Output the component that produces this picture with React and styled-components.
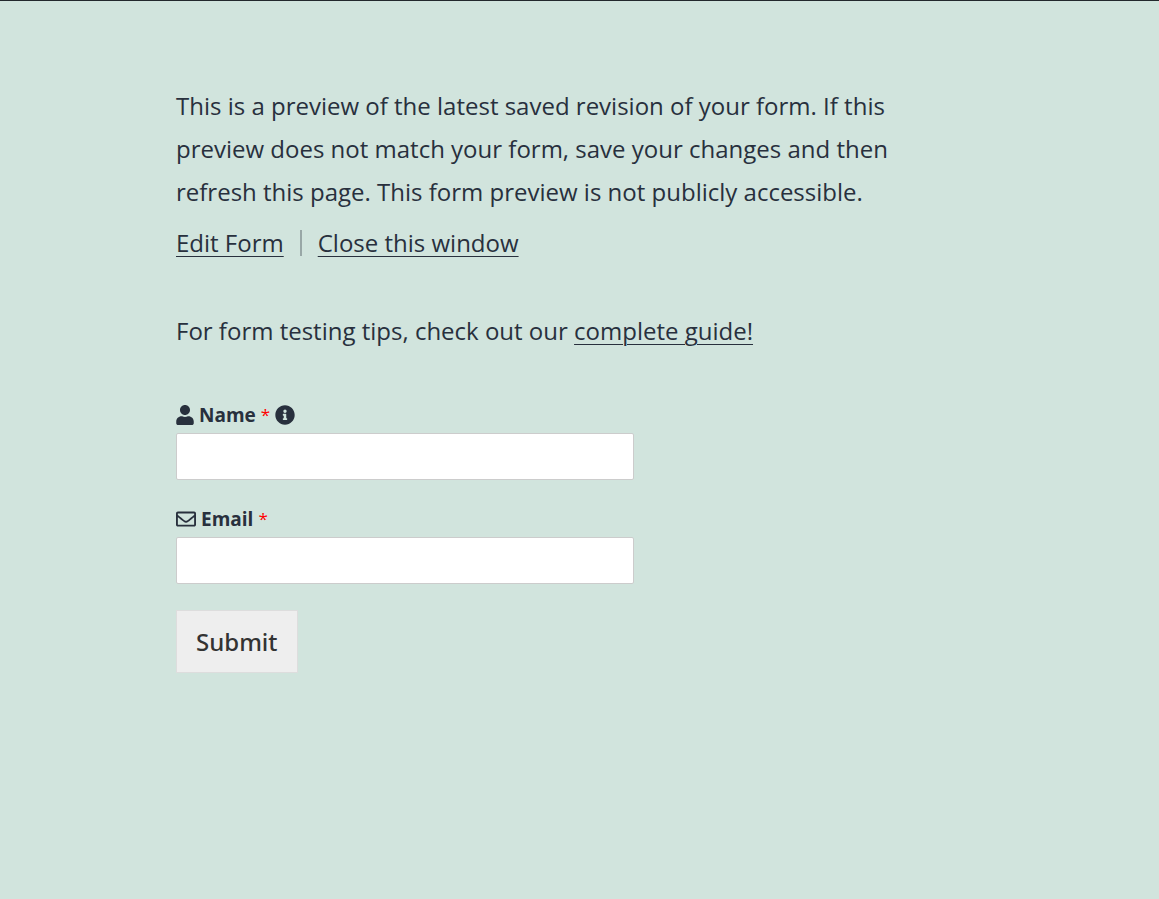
import React from "react";
import styled, { createGlobalStyle } from "styled-components";
import { FaUser, FaRegEnvelope, FaInfoCircle } from "react-icons/fa";

const GlobalStyle = createGlobalStyle`
  *, *::before, *::after { box-sizing: border-box; }
  body {
    margin: 0;
    min-height: 100vh;
    background: #d1e4dd;
    border-top: 1px solid #23282d;
    color: #28303d;
    font-family: "Segoe UI", "Open Sans", "Noto Sans", sans-serif;
    font-size: 24px;
    line-height: 43px;
  }
`;

const Page = styled.main`
  max-width: 855px;
  margin: 0 auto;
  padding: 83px 24px;
`;

const Content = styled.div`
  max-width: 763px;
`;

const Paragraph = styled.p`
  margin: 0 0 ${(p) => p.$gap}px;
`;

const Link = styled.a`
  color: inherit;
  text-decoration: underline;
  text-decoration-thickness: 1px;
  text-underline-offset: 4px;
`;

const Actions = styled.nav`
  display: flex;
  align-items: center;
  gap: 16px;
  margin-bottom: 45px;
`;

const Divider = styled.span`
  width: 2px;
  height: 26px;
  background: #98a7a6;
`;

const Form = styled.form`
  display: flex;
  flex-direction: column;
  align-items: flex-start;
  gap: 26px;
`;

const Field = styled.div`
  width: 60%;
`;

const Label = styled.label`
  display: flex;
  align-items: center;
  gap: 5px;
  margin-bottom: 5px;
  font-size: 19px;
  font-weight: 700;
  line-height: 26px;

  svg {
    display: block;
    flex: none;
    width: ${(p) => p.$iconWidth}px;
    height: 20px;
  }

  svg:last-child { width: 20px; }
`;

const Required = styled.span`
  color: #f00;
  font-size: 17px;
  font-weight: 400;
`;

const Input = styled.input`
  display: block;
  width: 100%;
  height: 47px;
  padding: 8px 12px;
  border: 1px solid #ccc;
  border-radius: 2px;
  background: #fff;
  color: #333;
  font: inherit;
  font-size: 19px;
`;

const Submit = styled.button`
  padding: 9px 19px;
  border: 1px solid #ddd;
  border-radius: 0;
  background: #eee;
  color: #333;
  font: inherit;
  font-family: "Segoe UI", "Noto Sans", sans-serif;
  font-weight: 500;
`;

export default function App() {
  return (
    <>
      <GlobalStyle />
      <Page>
        <Content>
          <Paragraph $gap={8}>
            This is a preview of the latest saved revision of your form. If this
            preview does not match your form, save your changes and then refresh
            this page. This form preview is not publicly accessible.
          </Paragraph>
          <Actions>
            <Link href="#edit">Edit Form</Link>
            <Divider />
            <Link href="#close">Close this window</Link>
          </Actions>
          <Paragraph $gap={50}>
            For form testing tips, check out our{" "}
            <Link href="#guide">complete guide!</Link>
          </Paragraph>
          <Form onSubmit={(e) => e.preventDefault()}>
            <Field>
              <Label htmlFor="name" $iconWidth={18}>
                <FaUser />
                Name <Required>*</Required>
                <FaInfoCircle />
              </Label>
              <Input id="name" type="text" required />
            </Field>
            <Field>
              <Label htmlFor="email" $iconWidth={20}>
                <FaRegEnvelope />
                Email <Required>*</Required>
              </Label>
              <Input id="email" type="email" required />
            </Field>
            <Submit type="submit">Submit</Submit>
          </Form>
        </Content>
      </Page>
    </>
  );
}
